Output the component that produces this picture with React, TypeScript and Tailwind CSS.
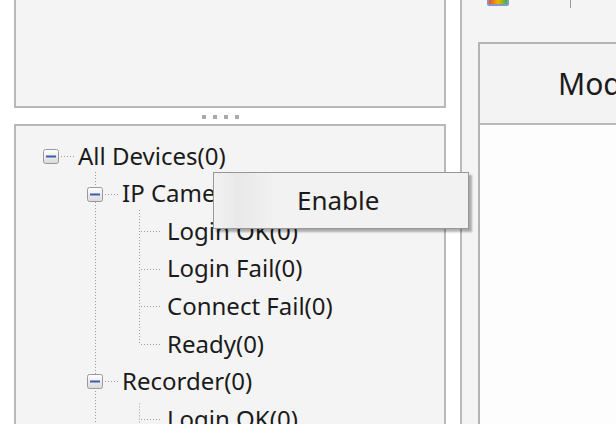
import React from 'react';

const ROW = 37.57;
const TOP = 30; // center of first row inside the tree panel

interface Node {
    label: string;
    level: number;
    expandable?: boolean;
}

const rows: Node[] = [
    { label: 'All Devices(0)', level: 0, expandable: true },
    { label: 'IP Camera(0)', level: 1, expandable: true },
    { label: 'Login OK(0)', level: 2 },
    { label: 'Login Fail(0)', level: 2 },
    { label: 'Connect Fail(0)', level: 2 },
    { label: 'Ready(0)', level: 2 },
    { label: 'Recorder(0)', level: 1, expandable: true },
    { label: 'Login OK(0)', level: 2 },
];

const textLeft = [62, 106, 151];

function MinusBox({ x, y }: { x: number; y: number }) {
    return (
        <g>
            <rect x={x + 0.5} y={y + 0.5} width={15} height={14} rx={2} fill="url(#boxFill)" stroke="#9a9a9a" />
            <line x1={x + 3} y1={y + 7.5} x2={x + 13} y2={y + 7.5} stroke="#3b5bab" strokeWidth={2} />
        </g>
    );
}

function TreeLines() {
    const cy = (i: number) => TOP + ROW * i;
    const dash = { stroke: '#9c9c9c', strokeWidth: 1, strokeDasharray: '1 2' } as const;
    return (
        <svg width={430} height={300} className="absolute left-0 top-0">
            <defs>
                <linearGradient id="boxFill" x1="0" y1="0" x2="0" y2="1">
                    <stop offset="0" stopColor="#ffffff" />
                    <stop offset="1" stopColor="#d9d9d9" />
                </linearGradient>
            </defs>
            {/* level 1 vertical */}
            <line x1={79.5} y1={46} x2={79.5} y2={300} {...dash} />
            {/* level 2 vertical under IP Camera */}
            <line x1={123.5} y1={84} x2={123.5} y2={cy(5)} {...dash} />
            {/* level 2 vertical under Recorder */}
            <line x1={123.5} y1={cy(6) + 22} x2={123.5} y2={300} {...dash} />
            {rows.map((r, i) => {
                const y = Math.round(cy(i)) + 0.5;
                if (r.level === 0) {
                    return <line key={i} x1={45} y1={y} x2={60} y2={y} {...dash} />;
                }
                if (r.level === 1) {
                    return <line key={i} x1={89} y1={y} x2={104} y2={y} {...dash} />;
                }
                return <line key={i} x1={125} y1={y} x2={145} y2={y} {...dash} />;
            })}
            {rows.map((r, i) =>
                r.expandable ? (
                    <MinusBox key={'b' + i} x={r.level === 0 ? 27 : 71} y={Math.round(cy(i)) - 7} />
                ) : null
            )}
        </svg>
    );
}

export default function App() {
    return (
        <div
            className="relative flex h-[424px] w-[616px] overflow-hidden bg-white text-[#1b1b1b]"
            style={{ fontFamily: '"Noto Sans", "Open Sans", sans-serif' }}
        >
            {/* Left column */}
            <div className="flex w-[446px] shrink-0 flex-col pl-[14px]">
                <div className="h-[108px] shrink-0 border-x-2 border-b-2 border-[#b9b9b9] bg-[#f4f4f4]" />
                <div className="flex h-[16px] shrink-0 items-center gap-[7px] pl-[188px] pt-[2px]">
                    <span className="h-[4px] w-[4px] bg-[#a9a9a9]" />
                    <span className="h-[4px] w-[4px] bg-[#a9a9a9]" />
                    <span className="h-[4px] w-[4px] bg-[#a9a9a9]" />
                    <span className="h-[4px] w-[4px] bg-[#a9a9a9]" />
                </div>
                <div className="relative flex-1 border-x-2 border-t-2 border-[#b9b9b9] bg-[#f4f4f4]">
                    <TreeLines />
                    <div className="relative pt-[11px]">
                        {rows.map((r, i) => (
                            <div
                                key={i}
                                className="flex h-[37.57px] items-center whitespace-nowrap text-[24px] leading-none"
                                style={{ paddingLeft: textLeft[r.level] }}
                            >
                                {r.label}
                            </div>
                        ))}
                    </div>
                </div>
            </div>

            {/* Right area */}
            <div className="ml-[14px] flex flex-1 flex-col border-l-2 border-[#b9b9b9] bg-[#f4f4f4]">
                <div className="relative h-[42px] shrink-0">
                    <div className="absolute left-[25px] top-[-6px] h-[12px] w-[22px] rounded-[2px] border-2 border-[#7f9cc8] bg-[linear-gradient(90deg,#e74c3c_0%,#f0b400_50%,#3cb04a_100%)]" />
                    <div className="absolute left-[108px] top-0 h-[8px] w-[1px] bg-[#9a9a9a]" />
                </div>
                <div className="ml-[16px] flex flex-1 flex-col border-l-2 border-t-2 border-[#b4b4b4] bg-[#fdfdfd]">
                    <div className="flex h-[81px] shrink-0 items-center whitespace-nowrap border-b-2 border-[#b9b9b9] bg-[#f3f3f3] pl-[78px] text-[30px]">
                        Model
                    </div>
                </div>
            </div>

            {/* Context menu */}
            <div className="absolute left-[213px] top-[172px] flex h-[57px] w-[256px] border border-[#979797] bg-[#f2f2f2] shadow-[3px_3px_2px_rgba(0,0,0,0.3)]">
                <div className="w-[57px] bg-[linear-gradient(90deg,#f2f2f2,#e9e9e9_40%,#f0f0f0)]" />
                <div className="flex items-center pl-[26px] text-[26px]">Enable</div>
            </div>
        </div>
    );
}
